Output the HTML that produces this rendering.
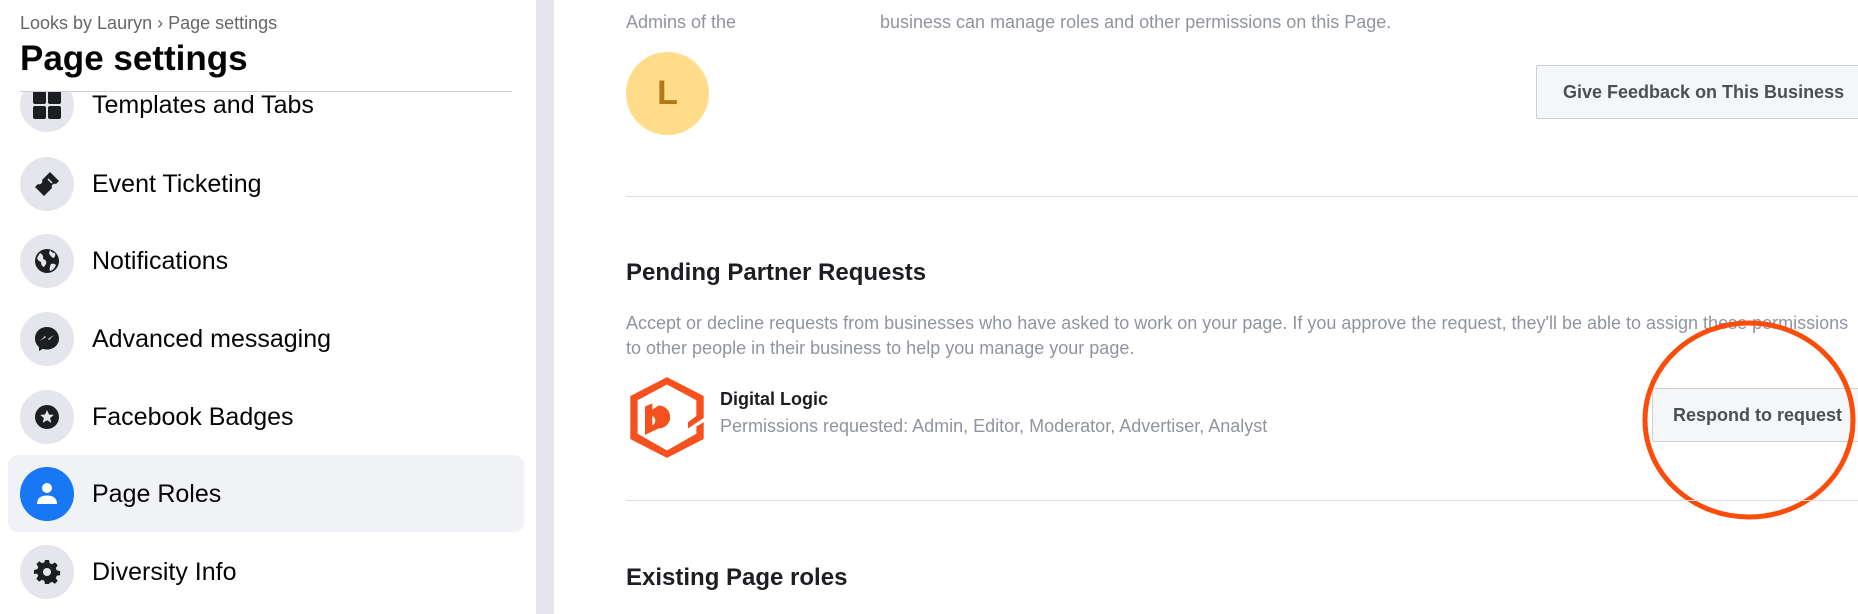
<!DOCTYPE html>
<html><head><meta charset="utf-8"><style>
*{margin:0;padding:0;box-sizing:border-box}
body{width:1858px;height:614px;overflow:hidden;background:#fff;position:relative;font-family:"Liberation Sans",Arial,sans-serif}
.abs{position:absolute;white-space:nowrap}
#side{position:absolute;left:0;top:0;width:536px;height:614px;background:#fff}
#strip{position:absolute;left:536px;top:0;width:18px;height:614px;background:#e4e6eb}
.crumb{left:20px;top:13px;font-size:18px;color:#65676b}
.title{left:20px;top:39px;font-size:35px;font-weight:bold;color:#050505}
.hr{position:absolute;height:1px;background:#ccced2}
.item{position:absolute;left:20px;height:56px;display:flex;align-items:center}
.ic{width:54px;height:54px;border-radius:50%;background:#e4e6eb;display:flex;align-items:center;justify-content:center;margin-right:18px}
.item span{font-size:25px;color:#050505}
.gray{color:#90949c}
.btn{position:absolute;background:#f5f6f7;border:1px solid #ccd0d5;border-radius:2px;font-weight:bold;font-size:18px;color:#4b4f56;display:flex;align-items:center;justify-content:center}
</style></head><body>
<div id="side">
<div class="item" style="top:77px"><div class="ic"><svg width="30" height="30" viewBox="0 0 30 30"><rect x="1" y="1" width="13" height="13" rx="2" fill="#1c1e21"/><rect x="16" y="1" width="13" height="13" rx="2" fill="#1c1e21"/><rect x="1" y="16" width="13" height="13" rx="2" fill="#1c1e21"/><rect x="16" y="16" width="13" height="13" rx="2" fill="#1c1e21"/></svg></div><span>Templates and Tabs</span></div>
<div style="position:absolute;left:0;top:0;width:536px;height:91px;background:#fff;z-index:0"></div>
<div class="abs crumb" style="z-index:1">Looks by Lauryn › Page settings</div>
<div class="abs title" style="z-index:1">Page settings</div>
<div class="hr" style="left:20px;top:91px;width:492px;z-index:1"></div>
<div class="item" style="top:156px"><div class="ic"><svg width="28" height="28" viewBox="0 0 28 28"><path d="M17 2 L26 11 L23 14 a3 3 0 0 0 -4 4 L11 26 L2 17 L5 14 a3 3 0 0 0 4 -4 Z" fill="#1c1e21"/><path d="M15 9 L19 13" stroke="#e4e6eb" stroke-width="1.5"/></svg></div><span>Event Ticketing</span></div>
<div class="item" style="top:233px"><div class="ic"><svg width="28" height="28" viewBox="0 0 28 28"><circle cx="14" cy="14" r="12" fill="#1c1e21"/><path d="M7 6 q4 2 3 6 q4 1 3 5 l-2 3 q-3 -1 -3 -5 q-3 -1 -4 -4 Z M17 3 q2 3 5 3 q1 4 -2 5 q-3 -2 -4 -5 Z M18 17 q3 -1 5 1 q-2 5 -6 6 q-1 -4 1 -7Z" fill="#e4e6eb"/></svg></div><span>Notifications</span></div>
<div class="item" style="top:311px"><div class="ic"><svg width="28" height="28" viewBox="0 0 28 28"><path d="M14 2 C7 2 2 7 2 13.5 c0 3.5 1.5 6.5 4 8.5 V26 l3.8 -2.1 C11.1 24.3 12.5 24.5 14 24.5 c7 0 12 -5 12 -11 S21 2 14 2Z" fill="#1c1e21"/><path d="M7 16 l5 -5 3 3 6 -4 -5 5 -3 -3Z" fill="#e4e6eb"/></svg></div><span>Advanced messaging</span></div>
<div class="item" style="top:389px"><div class="ic"><svg width="28" height="28" viewBox="0 0 28 28"><circle cx="14" cy="14" r="12" fill="#1c1e21"/><path d="M14 7 l2 4.5 4.8 .4 -3.7 3.2 1.2 4.8 -4.3 -2.6 -4.3 2.6 1.2 -4.8 -3.7 -3.2 4.8 -.4Z" fill="#e4e6eb"/></svg></div><span>Facebook Badges</span></div>
<div style="position:absolute;left:8px;top:455px;width:516px;height:77px;background:#f0f2f5;border-radius:10px"></div>
<div class="item" style="top:466px"><div class="ic" style="background:#1877f2"><svg width="28" height="28" viewBox="0 0 28 28"><circle cx="14" cy="8" r="5" fill="#fff"/><path d="M4 24 c0 -6 4 -8.5 10 -8.5 s10 2.5 10 8.5Z" fill="#fff"/></svg></div><span>Page Roles</span></div>
<div class="item" style="top:544px"><div class="ic"><svg width="28" height="28" viewBox="0 0 28 28"><path d="M12 2h4l.7 3.3 2.3 1 2.9 -1.9 2.8 2.8 -1.9 2.9 1 2.3 3.3 .7v4l-3.3 .7 -1 2.3 1.9 2.9 -2.8 2.8 -2.9 -1.9 -2.3 1L16 26h-4l-.7 -3.3 -2.3 -1 -2.9 1.9 -2.8 -2.8 1.9 -2.9 -1 -2.3L1 16v-4l3.3 -.7 1 -2.3 -1.9 -2.9 2.8 -2.8 2.9 1.9 2.3 -1Z" fill="#1c1e21"/><circle cx="14" cy="14" r="4" fill="#e4e6eb"/></svg></div><span>Diversity Info</span></div>
</div>
<div id="strip"></div>

<div class="abs gray" style="left:626px;top:12px;font-size:18px">Admins of the</div>
<div class="abs gray" style="left:880px;top:12px;font-size:18px">business can manage roles and other permissions on this Page.</div>
<div style="position:absolute;left:626px;top:52px;width:83px;height:83px;border-radius:50%;background:#ffdc8a;color:#b0781a;font-weight:bold;font-size:34px;display:flex;align-items:center;justify-content:center">L</div>
<div class="btn" style="left:1536px;top:65px;width:340px;height:54px;justify-content:flex-start;padding-left:26px">Give Feedback on This Business</div>
<div class="hr" style="left:626px;top:196px;width:1232px;background:#dddfe2"></div>
<div class="abs" style="left:626px;top:259px;font-size:24px;font-weight:bold;color:#1c1e21">Pending Partner Requests</div>
<div class="abs gray" style="left:626px;top:311px;font-size:18px;line-height:25px">Accept or decline requests from businesses who have asked to work on your page. If you approve the request, they'll be able to assign these permissions<br>to other people in their business to help you manage your page.</div>
<svg style="position:absolute;left:624px;top:374px" width="86" height="86" viewBox="0 0 80 82"><path d="M40 3 L75 21 L75 42 L60 52 L60 46 L68 40 L68 25 L40 10 L12 25 L12 57 L40 73 L68 57 L68 50 L75 46 L75 62 L40 80 L5 62 L5 21 Z" fill="#f4511e"/><path d="M19 31 L26 28 L26 34 L32 30 a11 11 0 0 1 0 22 L19 58 Z M26 40 v9 a5 5 0 0 0 0 -9Z" fill="#f4511e"/></svg>
<div class="abs" style="left:720px;top:389px;font-size:18px;font-weight:bold;color:#1c1e21">Digital Logic</div>
<div class="abs gray" style="left:720px;top:416px;font-size:18px">Permissions requested: Admin, Editor, Moderator, Advertiser, Analyst</div>
<div class="btn" style="left:1652px;top:388px;width:230px;height:54px;justify-content:flex-start;padding-left:20px">Respond to request</div>
<svg style="position:absolute;left:1640px;top:316px" width="218" height="210"><ellipse cx="109" cy="104" rx="104" ry="97" fill="none" stroke="#fc4c0a" stroke-width="5"/></svg>
<div class="hr" style="left:626px;top:500px;width:1232px;background:#dddfe2"></div>
<div class="abs" style="left:626px;top:564px;font-size:24px;font-weight:bold;color:#1c1e21">Existing Page roles</div>
</body></html>
